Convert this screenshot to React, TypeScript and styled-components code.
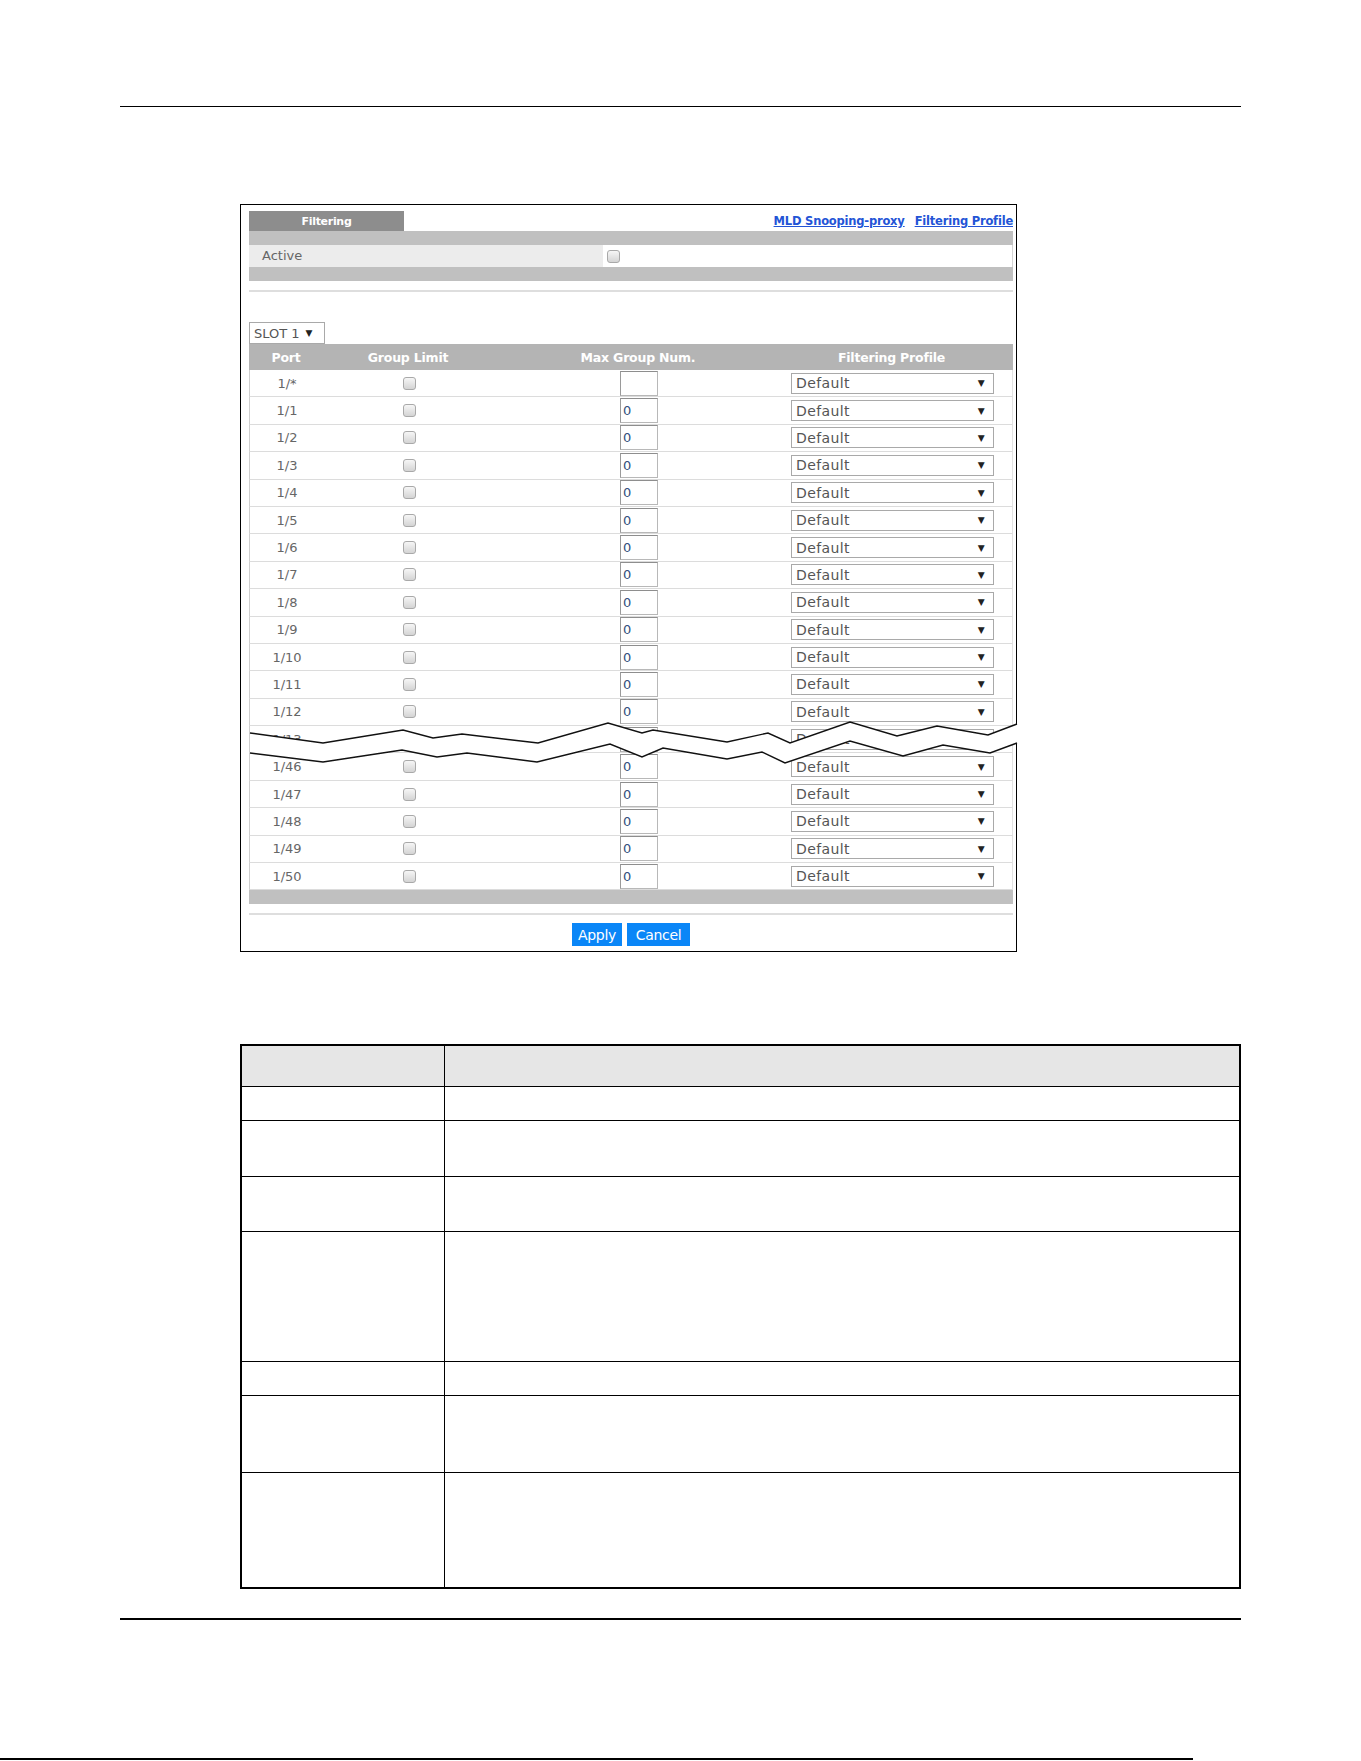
import React from 'react'
import styled, { createGlobalStyle } from 'styled-components'

const GlobalStyle = createGlobalStyle`
  html, body {
    margin: 0;
    padding: 0;
    background: #fff;
  }
  body {
    font-family: 'DejaVu Sans', 'Liberation Sans', sans-serif;
  }
`

const Page = styled.div`
  width: 1361px;
  min-height: 1761px;
  padding-top: 106px;
  box-sizing: border-box;
  display: flex;
  flex-direction: column;
  align-items: flex-start;
`

const Rule = styled.div<{ $thick: number; $top: number }>`
  width: 1121px;
  margin: ${(p) => p.$top}px 0 0 120px;
  height: ${(p) => p.$thick}px;
  background: #000;
`

const ScanEdge = styled.div`
  width: 1193px;
  height: 2px;
  margin-top: 138px;
  background: #000;
`

const Frame = styled.div`
  width: 777px;
  margin: 97px 0 0 240px;
  border: 1px solid #000;
  padding: 6px 3px 5px 8px;
  box-sizing: border-box;
  display: flex;
  flex-direction: column;
`

const TabRow = styled.div`
  height: 20px;
  display: flex;
  justify-content: space-between;
  align-items: flex-end;
`

const Tab = styled.div`
  width: 155px;
  height: 20px;
  background: #8d8d8d;
  color: #fff;
  font-weight: 700;
  font-size: 11px;
  letter-spacing: -0.3px;
  display: flex;
  align-items: center;
  justify-content: center;
`

const Links = styled.div`
  display: flex;
  gap: 10px;
  padding-bottom: 3px;
`

const NavLink = styled.a`
  color: #2354d6;
  font-weight: 700;
  font-size: 11.5px;
  letter-spacing: -0.2px;
  text-decoration: underline;
  cursor: pointer;
`

const Band = styled.div`
  height: 14px;
  background: #c0c0c0;
`

const ActiveRow = styled.div`
  height: 22px;
  display: flex;
`

const ActiveLabel = styled.div`
  width: 354px;
  background: #ececec;
  color: #666;
  font-size: 13px;
  line-height: 22px;
  padding-left: 13px;
  box-sizing: border-box;
`

const ActiveValue = styled.div`
  flex: 1;
  background: #fff;
  border-right: 1px solid #d4d4d4;
  display: flex;
  align-items: center;
  padding-left: 4px;
`

const Check = styled.span`
  display: inline-block;
  width: 13px;
  height: 13px;
  box-sizing: border-box;
  border: 1px solid #a9a9a9;
  border-radius: 3px;
  background: linear-gradient(#f6f6f6, #d4d4d4);
`

const Separator = styled.div<{ $top: number }>`
  height: 2px;
  margin-top: ${(p) => p.$top}px;
  background: #dedede;
`

const SlotSelect = styled.div`
  margin-top: 30px;
  width: 76px;
  height: 22px;
  box-sizing: border-box;
  border: 1px solid #a9a9a9;
  display: flex;
  align-items: center;
  gap: 6px;
  padding-left: 4px;
  color: #555;
  font-size: 13px;
`

const Arrow = styled.span`
  font-size: 9px;
  color: #222;
`

const gridCols = '74px 170px 290px 217px 1fr'

const HeaderRow = styled.div`
  height: 26px;
  display: grid;
  grid-template-columns: ${gridCols};
  align-items: center;
  background: #b4b4b4;
  color: #fff;
  font-weight: 700;
  font-size: 12.5px;
  letter-spacing: -0.2px;
`

const HeadCell = styled.div`
  text-align: center;
`

const RowList = styled.div`
  position: relative;
`

const PortRow = styled.div`
  height: 27.4px;
  box-sizing: border-box;
  display: grid;
  grid-template-columns: ${gridCols};
  align-items: center;
  justify-items: center;
  border-left: 1px solid #cfcfcf;
  border-right: 1px solid #e2e2e2;
  border-bottom: 1px solid #dcdcdc;
  color: #666;
  font-size: 13px;
`

const NumBox = styled.div`
  width: 38px;
  height: 25px;
  box-sizing: border-box;
  border: 1px solid #b8b8b8;
  border-top-color: #8e8e8e;
  border-left-color: #9a9a9a;
  color: #34517c;
  font-size: 13px;
  line-height: 23px;
  padding-left: 2px;
`

const ProfileSelect = styled.div`
  width: 203px;
  height: 21px;
  box-sizing: border-box;
  border: 1px solid #a9a9a9;
  background: #fff;
  display: flex;
  align-items: center;
  justify-content: space-between;
  padding: 0 8px 0 4px;
  color: #555;
  font-size: 14px;
  letter-spacing: 0.4px;
`

const BreakMark = styled.svg`
  position: absolute;
  left: 0;
  top: 0;
  overflow: visible;
  pointer-events: none;
`

const ButtonBar = styled.div`
  margin-top: 8px;
  display: flex;
  justify-content: center;
  gap: 5px;
`

const ActionButton = styled.button<{ $w: number }>`
  width: ${(p) => p.$w}px;
  height: 23px;
  border: none;
  padding: 0;
  background: #0a86f7;
  color: #fff;
  font-family: 'DejaVu Sans', sans-serif;
  font-size: 14px;
  letter-spacing: -0.3px;
  cursor: pointer;
`

const DocTable = styled.table`
  width: 1001px;
  margin: 92px 0 0 240px;
  border-collapse: collapse;
  border: 2px solid #000;
  table-layout: fixed;
`

const DocCell = styled.td<{ $head?: boolean }>`
  border: 1.5px solid #000;
  background: ${(p) => (p.$head ? '#e6e6e6' : '#fff')};
  padding: 0;
`

const ports = [
  '1/*', '1/1', '1/2', '1/3', '1/4', '1/5', '1/6', '1/7', '1/8', '1/9', '1/10', '1/11', '1/12', '1/13',
  '1/46', '1/47', '1/48', '1/49', '1/50',
]

// torn-edge break drawn across the port list, between 1/13 and 1/46
const upperEdge: [number, number][] = [
  [1, 363], [74, 373], [154, 360], [184, 368], [213, 364], [289, 373], [359, 353], [393, 363], [404, 360],
  [478, 372], [519, 363], [541, 373], [601, 352], [648, 366], [688, 356], [739, 365], [768, 354],
]
const lowerEdge: [number, number][] = [
  [1, 383], [74, 392], [153, 380], [188, 387], [218, 383], [288, 392], [361, 374], [393, 387], [414, 378],
  [478, 389], [513, 382], [536, 393], [601, 371], [654, 386], [694, 375], [741, 383], [768, 373],
]
const toPts = (pts: [number, number][]) => pts.map(([x, y]) => `${x},${y}`).join(' ')

const docRows = [41, 34, 56, 55, 130, 34, 77, 116]

const App: React.FC = () => {
  return (
    <Page>
      <GlobalStyle />
      <Rule $thick={1} $top={0} />

      <Frame>
        <TabRow>
          <Tab>Filtering</Tab>
          <Links>
            <NavLink>MLD Snooping-proxy</NavLink>
            <NavLink>Filtering Profile</NavLink>
          </Links>
        </TabRow>
        <Band />
        <ActiveRow>
          <ActiveLabel>Active</ActiveLabel>
          <ActiveValue>
            <Check />
          </ActiveValue>
        </ActiveRow>
        <Band />
        <Separator $top={9} />

        <SlotSelect>
          SLOT 1 <Arrow>▼</Arrow>
        </SlotSelect>
        <HeaderRow>
          <HeadCell>Port</HeadCell>
          <HeadCell>Group Limit</HeadCell>
          <HeadCell>Max Group Num.</HeadCell>
          <HeadCell>Filtering Profile</HeadCell>
        </HeaderRow>
        <RowList>
          {ports.map((port, i) => (
            <PortRow key={port}>
              <span>{port}</span>
              <Check />
              <NumBox>{i === 0 ? '' : '0'}</NumBox>
              <ProfileSelect>
                Default <Arrow>▼</Arrow>
              </ProfileSelect>
            </PortRow>
          ))}
          <BreakMark width={769} height={520} viewBox="0 0 769 520">
            <polygon points={toPts([...upperEdge, ...[...lowerEdge].reverse()])} fill="#fff" />
            <polyline points={toPts(upperEdge)} fill="none" stroke="#111" strokeWidth={1.4} />
            <polyline points={toPts(lowerEdge)} fill="none" stroke="#111" strokeWidth={1.4} />
          </BreakMark>
        </RowList>
        <Band />
        <Separator $top={9} />
        <ButtonBar>
          <ActionButton $w={50}>Apply</ActionButton>
          <ActionButton $w={63}>Cancel</ActionButton>
        </ButtonBar>
      </Frame>

      <DocTable>
        <colgroup>
          <col style={{ width: 203 }} />
          <col />
        </colgroup>
        <tbody>
          {docRows.map((h, i) => (
            <tr key={i} style={{ height: h }}>
              <DocCell $head={i === 0} />
              <DocCell $head={i === 0} />
            </tr>
          ))}
        </tbody>
      </DocTable>

      <Rule $thick={2} $top={29} />
      <ScanEdge />
    </Page>
  )
}

export default App
